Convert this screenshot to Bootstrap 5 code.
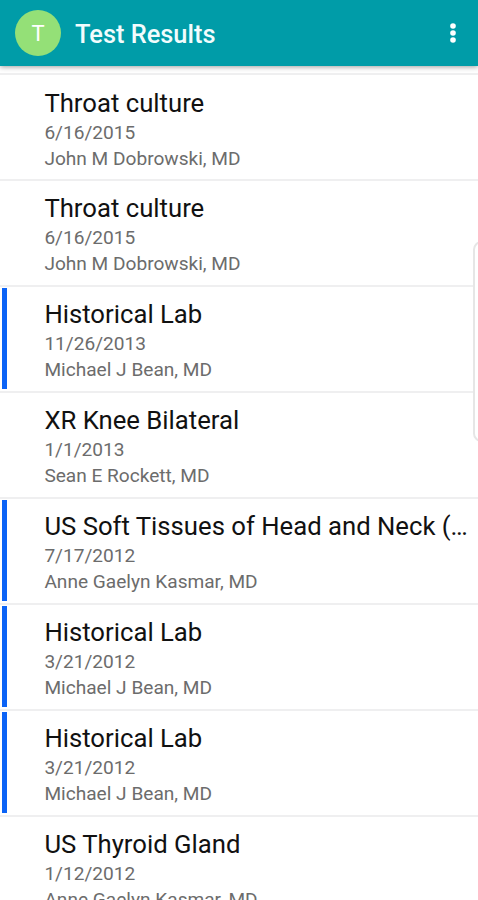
<!DOCTYPE html>
<html lang="en">
<head>
<meta charset="utf-8">
<meta name="viewport" content="width=device-width, initial-scale=1">
<title>Test Results</title>
<link href="https://cdn.jsdelivr.net/npm/bootstrap@5.3.0/dist/css/bootstrap.min.css" rel="stylesheet">
<style>
body { font-family: Roboto, sans-serif; height: 900px; background: #fff; }
.app-bar { height: 66px; padding: 0 19px 0 15px; background: #009ca8; box-shadow: 0 1px 5px rgba(0,0,0,.38); z-index: 2; }
.avatar { width: 46px; height: 46px; background: #94e077; color: #fff; font-size: 22px; }
.app-title { font-size: 25.4px; font-weight: 500; line-height: 30px; margin: 1px 0 0 14px; color: #f2fcfd; }
.results { padding-top: 7px; }
.results .result { height: 105.95px; padding: 12.5px 11px 0 44.4px; border: 0; border-top: 2px solid #efeff0; background: transparent; color: #6c6c6c; font-size: 19.1px; line-height: 26px; }
.result-name { font-size: 25.7px; line-height: 30px; font-weight: 400; color: #111; margin: 0 -5px 2px 0; }
.unread::before { content: ""; position: absolute; left: 2px; top: 1px; bottom: 2px; width: 4.5px; background: #0b63f6; }
.side-handle { right: -12px; top: 241px; width: 17px; height: 201px; border: 2px solid #e6e6e6; border-radius: 9px; background: #fff; z-index: 1; }
</style>
</head>
<body class="overflow-hidden position-relative">
<header class="app-bar d-flex align-items-center position-relative">
  <div class="avatar rounded-circle d-flex align-items-center justify-content-center">T</div>
  <h1 class="app-title">Test Results</h1>
  <button class="btn p-0 border-0 ms-auto d-flex" aria-label="More options">
    <svg width="12" height="24" viewBox="0 0 12 24" fill="#fff"><circle cx="6" cy="5" r="2.8"/><circle cx="6" cy="12" r="2.8"/><circle cx="6" cy="19" r="2.8"/></svg>
  </button>
</header>
<main class="results list-group list-group-flush">
  <article class="result list-group-item"><h2 class="result-name text-nowrap">Throat culture</h2><div>6/16/2015</div><div>John M Dobrowski, MD</div></article>
  <article class="result list-group-item"><h2 class="result-name text-nowrap">Throat culture</h2><div>6/16/2015</div><div>John M Dobrowski, MD</div></article>
  <article class="result list-group-item unread"><h2 class="result-name text-nowrap">Historical Lab</h2><div>11/26/2013</div><div>Michael J Bean, MD</div></article>
  <article class="result list-group-item"><h2 class="result-name text-nowrap">XR Knee Bilateral</h2><div>1/1/2013</div><div>Sean E Rockett, MD</div></article>
  <article class="result list-group-item unread"><h2 class="result-name text-nowrap">US Soft Tissues of Head and Neck (…</h2><div>7/17/2012</div><div>Anne Gaelyn Kasmar, MD</div></article>
  <article class="result list-group-item unread"><h2 class="result-name text-nowrap">Historical Lab</h2><div>3/21/2012</div><div>Michael J Bean, MD</div></article>
  <article class="result list-group-item unread"><h2 class="result-name text-nowrap">Historical Lab</h2><div>3/21/2012</div><div>Michael J Bean, MD</div></article>
  <article class="result list-group-item"><h2 class="result-name text-nowrap">US Thyroid Gland</h2><div>1/12/2012</div><div>Anne Gaelyn Kasmar, MD</div></article>
</main>
<div class="side-handle position-absolute"></div>
<script src="https://cdn.jsdelivr.net/npm/bootstrap@5.3.0/dist/js/bootstrap.bundle.min.js"></script>
</body>
</html>
